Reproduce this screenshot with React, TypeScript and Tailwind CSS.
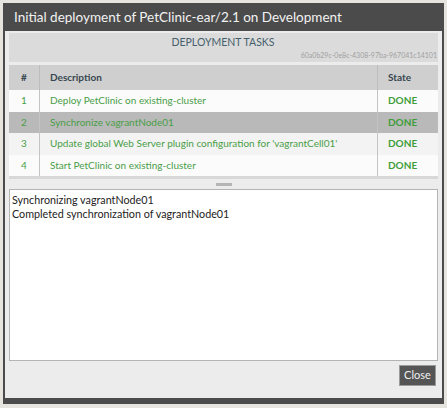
const tasks = [
  { id: 1, text: "Deploy PetClinic on existing-cluster", bg: "bg-[#fbfbfb]" },
  { id: 2, text: "Synchronize vagrantNode01", bg: "bg-[#b9b9b9]" },
  { id: 3, text: "Update global Web Server plugin configuration for 'vagrantCell01'", bg: "bg-[#f3f3f3]" },
  { id: 4, text: "Start PetClinic on existing-cluster", bg: "bg-[#fbfbfb]" },
];

export default function App() {
  return (
    <div className="h-[408px] w-[447px] bg-[#e6e4de] p-[3px] font-['Lato',sans-serif]">
      <div className="flex h-[401px] w-[441px] flex-col border-x-2 border-b-[6px] border-[#4b4b4b] bg-[#ececec]">
        {/* title bar */}
        <div className="flex h-[28px] shrink-0 items-center bg-[#4b4b4b] pl-[9px] text-[13.5px] text-[#f2f2f2]">
          Initial deployment of PetClinic-ear/2.1 on Development
        </div>

        <div className="flex flex-1 flex-col px-[4px] pt-[2px]">
          {/* section header */}
          <div className="flex h-[29px] flex-col bg-[#dbdbdb] pr-[1px]">
            <div className="pt-[2px] text-center text-[10.5px] leading-[14px] text-[#46606b]">DEPLOYMENT TASKS</div>
            <div className="pt-[1px] text-right text-[7px] leading-[10px] text-[#a0a0a0]">
              60a0b29c-0e8c-4308-97ba-967041c14101
            </div>
          </div>

          {/* task table */}
          <div className="mt-[3px] border-b-[3px] border-[#d8d8d8] bg-white">
            <div className="flex h-[25px] items-center bg-[#cfcfcf] text-[10px] font-bold text-[#37474f]">
              <div className="w-[30px] text-center">#</div>
              <div className="flex h-full flex-1 items-center border-l border-[#bdbdbd] pl-[10px]">Description</div>
              <div className="flex h-full w-[61px] items-center border-l border-[#bdbdbd] pl-[10px]">State</div>
            </div>
            {tasks.map((task) => (
              <div key={task.id} className={`flex h-[21.5px] items-center text-[10px] text-[#4a9e48] ${task.bg}`}>
                <div className="w-[30px] text-center">{task.id}</div>
                <div className="flex h-full flex-1 items-center border-l border-[#c4c4c4] pl-[10px]">{task.text}</div>
                <div className="flex h-full w-[61px] items-center border-l border-[#c4c4c4] pl-[10px] font-bold text-[#3f9e3a]">
                  DONE
                </div>
              </div>
            ))}
          </div>

          {/* splitter */}
          <div className="flex h-[10px] items-center justify-center">
            <div className="h-[3px] w-[16px] bg-[#b5b5b5]" />
          </div>

          {/* log */}
          <div className="h-[172px] border border-[#b4b4b4] bg-white px-[2px] pt-[3px] text-[10.75px] leading-[14px] text-[#222]">
            <div>Synchronizing vagrantNode01</div>
            <div>Completed synchronization of vagrantNode01</div>
          </div>

          <div className="flex justify-end pr-[2px] pt-[4px]">
            <button className="h-[21px] w-[37px] border border-[#9a9a9a] bg-[#555555] text-[11px] text-[#f0f0f0]">
              Close
            </button>
          </div>
        </div>
      </div>
    </div>
  );
}
